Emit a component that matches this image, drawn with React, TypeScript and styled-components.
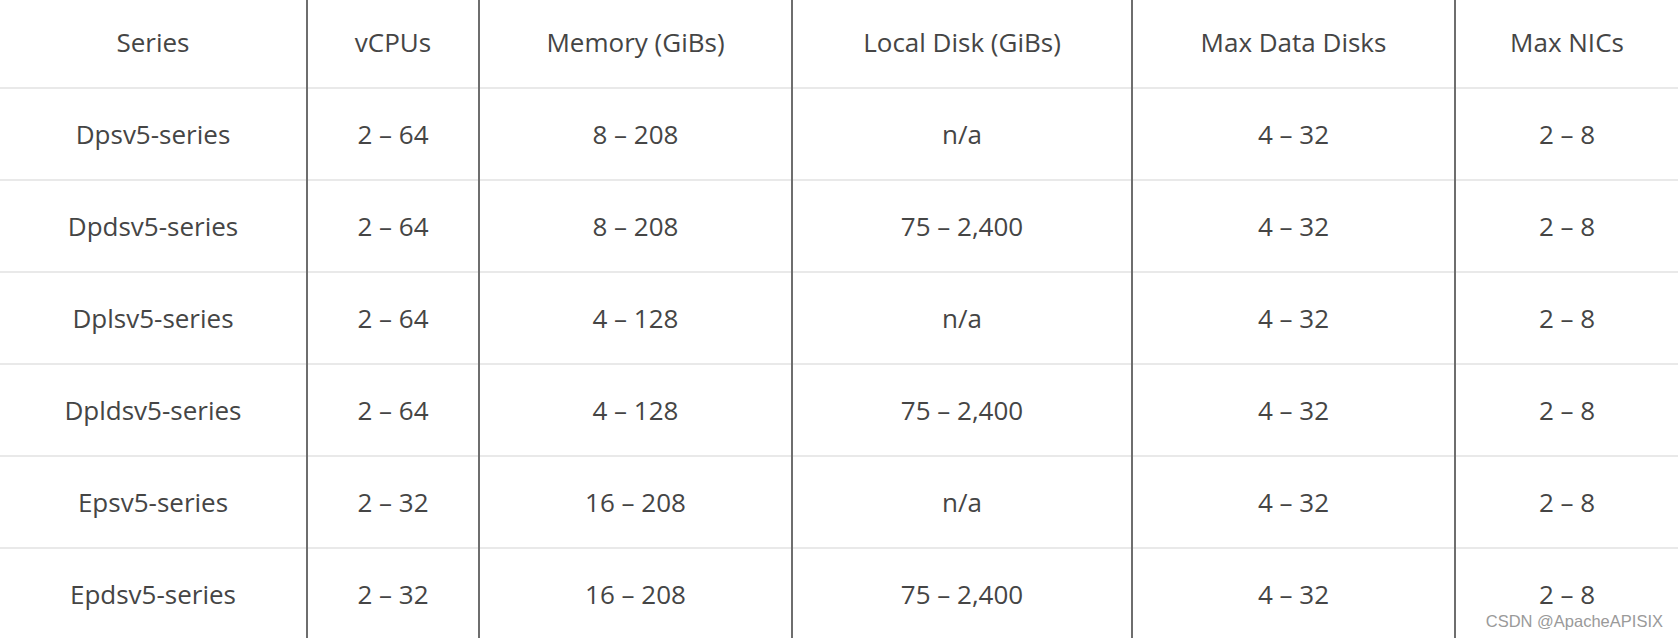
import styled, { createGlobalStyle } from "styled-components";

const GlobalStyle = createGlobalStyle`
  html, body {
    margin: 0;
    padding: 0;
    background: #ffffff;
    overflow: hidden;
  }
`;

const Page = styled.div`
  position: relative;
  width: 1678px;
  height: 638px;
  overflow: hidden;
  font-family: "Open Sans", "Noto Sans", sans-serif;
  color: #454545;
`;

const Table = styled.table`
  width: 1678px;
  border-collapse: collapse;
  table-layout: fixed;
`;

const Row = styled.tr<{ $head?: boolean }>`
  height: ${(props) => (props.$head ? "88px" : "92px")};
  border-bottom: 2px solid #e9e9e9;
`;

const Cell = styled.td`
  padding: 0;
  text-align: center;
  vertical-align: middle;
  font-size: 26px;
  font-weight: 400;
  line-height: 1;
  border-left: 2px solid #6e6e6e;

  &:first-child {
    border-left: none;
  }
`;

const HeadCell = styled(Cell).attrs({ as: "th" })`
  font-weight: 400;
  padding-bottom: 4px;
`;

const Watermark = styled.div`
  position: absolute;
  right: 15px;
  bottom: 9px;
  font-family: "Liberation Sans", Arial, sans-serif;
  font-size: 16.5px;
  line-height: 1;
  color: #9a9a9a;
`;

const widths = [307, 172, 313, 340, 323, 223];

const headers = [
  "Series",
  "vCPUs",
  "Memory (GiBs)",
  "Local Disk (GiBs)",
  "Max Data Disks",
  "Max NICs",
];

const rows = [
  ["Dpsv5-series", "2 – 64", "8 – 208", "n/a", "4 – 32", "2 – 8"],
  ["Dpdsv5-series", "2 – 64", "8 – 208", "75 – 2,400", "4 – 32", "2 – 8"],
  ["Dplsv5-series", "2 – 64", "4 – 128", "n/a", "4 – 32", "2 – 8"],
  ["Dpldsv5-series", "2 – 64", "4 – 128", "75 – 2,400", "4 – 32", "2 – 8"],
  ["Epsv5-series", "2 – 32", "16 – 208", "n/a", "4 – 32", "2 – 8"],
  ["Epdsv5-series", "2 – 32", "16 – 208", "75 – 2,400", "4 – 32", "2 – 8"],
];

export default function App() {
  return (
    <>
      <GlobalStyle />
      <Page>
        <Table>
          <colgroup>
            {widths.map((w, i) => (
              <col key={i} style={{ width: w }} />
            ))}
          </colgroup>
          <thead>
            <Row $head>
              {headers.map((h) => (
                <HeadCell key={h}>{h}</HeadCell>
              ))}
            </Row>
          </thead>
          <tbody>
            {rows.map((r) => (
              <Row key={r[0]}>
                {r.map((c, i) => (
                  <Cell key={i}>{c}</Cell>
                ))}
              </Row>
            ))}
          </tbody>
        </Table>
        <Watermark>CSDN @ApacheAPISIX</Watermark>
      </Page>
    </>
  );
}
